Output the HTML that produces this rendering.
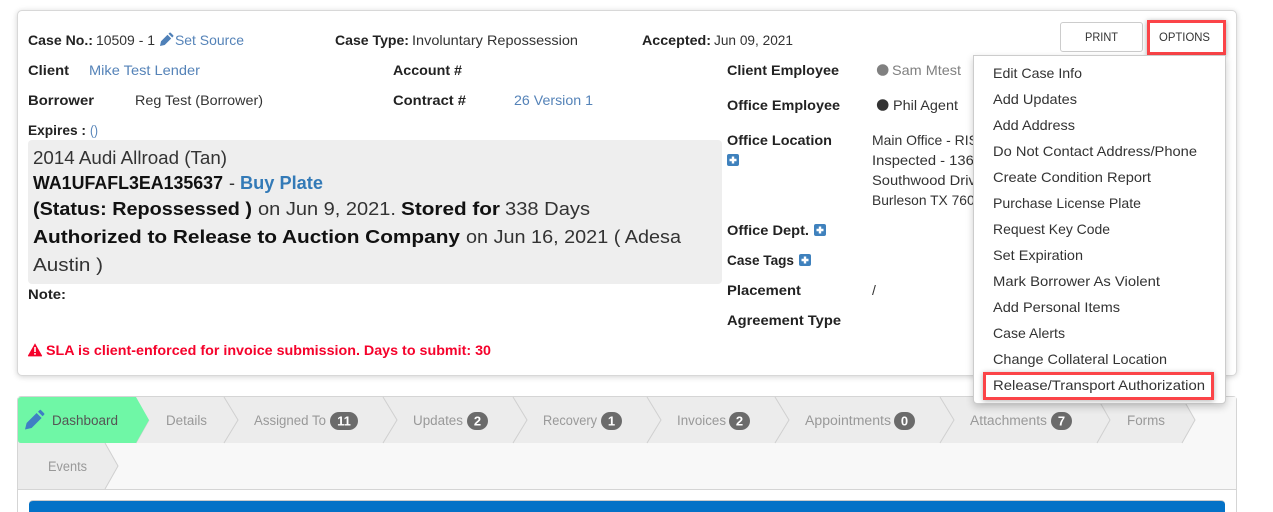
<!DOCTYPE html>
<html>
<head>
<meta charset="utf-8">
<style>
html,body{margin:0;padding:0;background:#fff;width:1273px;height:512px;overflow:hidden;position:relative;font-family:"Liberation Sans",sans-serif}
.abs{position:absolute;box-sizing:border-box}
svg.layer{position:absolute;left:0;top:0;width:1273px;height:512px}
text{font-family:"Liberation Sans",sans-serif;font-size:14px;fill:#333}
.b{font-weight:bold;fill:#222}
.l{fill:#5583b8}
.big{font-size:18.5px;fill:#333}
.bb{font-size:18.5px;font-weight:bold;fill:#111}
.t{fill:#999;font-size:13.5px}
.w{fill:#fff;font-weight:bold;font-size:13px;text-anchor:middle}
.m{fill:#333}
</style>
</head>
<body>
<div class="abs" style="left:17px;top:10px;width:1220px;height:366px;background:#fff;border:1px solid #d8d8d8;border-radius:5px;box-shadow:0 1px 6px rgba(0,0,0,.18)"></div>
<div class="abs" style="left:28px;top:140px;width:694px;height:144px;background:#eee;border-radius:4px"></div>

<svg class="layer" viewBox="0 0 1273 512">
<text class="b" x="28" y="45" textLength="65" lengthAdjust="spacingAndGlyphs">Case No.:</text>
<text x="96" y="45" textLength="59" lengthAdjust="spacingAndGlyphs">10509 - 1</text>
<path d="M160 46l1-4.700 6.500-6.500 3.700 3.700-6.500 6.500zM168.500 33.800l1-1q.6-.6 1.200 0l2.500 2.500q.6.6 0 1.200l-1 1z" fill="#4f80b8"/>
<text class="l" x="175" y="45" textLength="69" lengthAdjust="spacingAndGlyphs">Set Source</text>
<text class="b" x="335" y="45" textLength="74" lengthAdjust="spacingAndGlyphs">Case Type:</text>
<text x="412" y="45" textLength="166" lengthAdjust="spacingAndGlyphs">Involuntary Repossession</text>
<text class="b" x="642" y="45" textLength="69" lengthAdjust="spacingAndGlyphs">Accepted:</text>
<text x="714" y="45" textLength="79" lengthAdjust="spacingAndGlyphs">Jun 09, 2021</text>

<text class="b" x="28" y="75" textLength="41" lengthAdjust="spacingAndGlyphs">Client</text>
<text class="l" x="89" y="75" textLength="111" lengthAdjust="spacingAndGlyphs">Mike Test Lender</text>
<text class="b" x="393" y="75" textLength="69" lengthAdjust="spacingAndGlyphs">Account #</text>
<text class="b" x="28" y="105" textLength="66" lengthAdjust="spacingAndGlyphs">Borrower</text>
<text x="135" y="105" textLength="128" lengthAdjust="spacingAndGlyphs">Reg Test (Borrower)</text>
<text class="b" x="393" y="105" textLength="73" lengthAdjust="spacingAndGlyphs">Contract #</text>
<text class="l" x="514" y="105" textLength="79" lengthAdjust="spacingAndGlyphs">26 Version 1</text>
<text class="b" x="28" y="135" textLength="58" lengthAdjust="spacingAndGlyphs">Expires :</text>
<text class="l" x="90" y="135" textLength="8" lengthAdjust="spacingAndGlyphs">()</text>

<text class="big" x="33" y="164" textLength="194" lengthAdjust="spacingAndGlyphs">2014 Audi Allroad (Tan)</text>
<text class="bb" x="33" y="189" textLength="190" lengthAdjust="spacingAndGlyphs">WA1UFAFL3EA135637</text>
<text class="big" x="229" y="189" textLength="6" lengthAdjust="spacingAndGlyphs">-</text>
<text class="bb" x="240" y="189" textLength="83" lengthAdjust="spacingAndGlyphs" style="fill:#337ab7">Buy Plate</text>
<text class="bb" x="33" y="215" textLength="219" lengthAdjust="spacingAndGlyphs">(Status: Repossessed )</text>
<text class="big" x="258" y="215" textLength="138" lengthAdjust="spacingAndGlyphs">on Jun 9, 2021.</text>
<text class="bb" x="401" y="215" textLength="99" lengthAdjust="spacingAndGlyphs">Stored for</text>
<text class="big" x="505" y="215" textLength="85" lengthAdjust="spacingAndGlyphs">338 Days</text>
<text class="bb" x="33" y="243" textLength="427" lengthAdjust="spacingAndGlyphs">Authorized to Release to Auction Company</text>
<text class="big" x="466" y="243" textLength="215" lengthAdjust="spacingAndGlyphs">on Jun 16, 2021 ( Adesa</text>
<text class="big" x="33" y="271" textLength="70" lengthAdjust="spacingAndGlyphs">Austin )</text>

<text class="b" x="28" y="299" textLength="38" lengthAdjust="spacingAndGlyphs">Note:</text>
<path d="M35 343.200l7 12.300a.6.6 0 0 1-.5.9h-13a.6.6 0 0 1-.5-.9z" fill="#f5022b"/>
<rect x="34.200" y="347" width="1.600" height="5" fill="#fff"/><rect x="34.200" y="353" width="1.600" height="1.700" fill="#fff"/>
<text x="46" y="355" textLength="445" lengthAdjust="spacingAndGlyphs" style="font-weight:bold;fill:#f5022b">SLA is client-enforced for invoice submission. Days to submit: 30</text>

<text class="b" x="727" y="75" textLength="112" lengthAdjust="spacingAndGlyphs">Client Employee</text>
<circle cx="882.700" cy="70" r="5.800" fill="#808080"/>
<text x="892" y="75" textLength="69" lengthAdjust="spacingAndGlyphs" style="fill:#808080">Sam Mtest</text>
<text class="b" x="727" y="110" textLength="113" lengthAdjust="spacingAndGlyphs">Office Employee</text>
<circle cx="882.700" cy="105" r="5.800" fill="#333"/>
<text x="893" y="110" textLength="65" lengthAdjust="spacingAndGlyphs">Phil Agent</text>
<text class="b" x="727" y="145" textLength="105" lengthAdjust="spacingAndGlyphs">Office Location</text>
<rect x="727" y="154" width="12" height="12" rx="2" fill="#3f81bd"/><path d="M729.500 160h7M733 156.500v7" stroke="#fff" stroke-width="2.400"/>
<text x="872" y="145" textLength="116" lengthAdjust="spacingAndGlyphs">Main Office - RISC</text>
<text x="872" y="165" textLength="110" lengthAdjust="spacingAndGlyphs">Inspected - 1360</text>
<text x="872" y="185" textLength="112" lengthAdjust="spacingAndGlyphs">Southwood Drive</text>
<text x="872" y="205" textLength="118" lengthAdjust="spacingAndGlyphs">Burleson TX 76028</text>
<text class="b" x="727" y="235" textLength="82" lengthAdjust="spacingAndGlyphs">Office Dept.</text>
<rect x="814" y="224" width="12" height="12" rx="2" fill="#3f81bd"/><path d="M816.500 230h7M820 226.500v7" stroke="#fff" stroke-width="2.400"/>
<text class="b" x="727" y="265" textLength="67" lengthAdjust="spacingAndGlyphs">Case Tags</text>
<rect x="799" y="254" width="12" height="12" rx="2" fill="#3f81bd"/><path d="M801.500 260h7M805 256.500v7" stroke="#fff" stroke-width="2.400"/>
<text class="b" x="727" y="295" textLength="74" lengthAdjust="spacingAndGlyphs">Placement</text>
<text x="872" y="295">/</text>
<text class="b" x="727" y="325" textLength="114" lengthAdjust="spacingAndGlyphs">Agreement Type</text>
</svg>

<!-- tabs panel -->
<div class="abs" style="left:17px;top:396px;width:1220px;height:130px;background:#fff;border:1px solid #d5d5d5;border-radius:4px 4px 0 0"></div>
<svg class="layer" viewBox="0 0 1273 512">
<rect x="18" y="397" width="1218" height="92" fill="#f8f8f8"/>
<line x1="18" y1="489.500" x2="1236" y2="489.500" stroke="#d5d5d5"/>
<path d="M18 397H1182L1195 420L1182 443H18Z" fill="#ececec"/>
<path d="M18 443H105L118 466L105 489H18Z" fill="#ececec"/>
<g fill="none" stroke="#d0d0d0">
<path d="M224 397L238 420L224 443"/><path d="M383 397L397 420L383 443"/><path d="M513 397L527 420L513 443"/><path d="M647 397L661 420L647 443"/><path d="M775 397L789 420L775 443"/><path d="M940 397L954 420L940 443"/><path d="M1097 397L1110 420L1097 443"/><path d="M1182 397L1195 420L1182 443"/><path d="M105 443L118 466L105 489"/>
<path d="M136 443L149 420"/>
</g>
<path d="M21 397H136L149 420L136 443H21Q18 443 18 440V400Q18 397 21 397Z" fill="#6ff7a6"/>
<path d="M25 429.500l1.600-6.500 10-10 5 5-10 10zM38 411.700l1.500-1.500q.8-.8 1.600 0l3 3q.8.8 0 1.600l-1.500 1.500z" fill="#3f7fc4"/>
<text x="52" y="425" textLength="66" lengthAdjust="spacingAndGlyphs" style="font-size:13.500px;fill:#555">Dashboard</text>
<text class="t" x="166" y="425" textLength="41" lengthAdjust="spacingAndGlyphs">Details</text>
<text class="t" x="254" y="425" textLength="72" lengthAdjust="spacingAndGlyphs">Assigned To</text>
<rect x="330" y="412" width="28" height="18" rx="9" fill="#6b6b6b"/><text class="w" x="344" y="425.500">11</text>
<text class="t" x="413" y="425" textLength="50" lengthAdjust="spacingAndGlyphs">Updates</text>
<rect x="467" y="412" width="21" height="18" rx="9" fill="#6b6b6b"/><text class="w" x="477.500" y="425.500">2</text>
<text class="t" x="543" y="425" textLength="54" lengthAdjust="spacingAndGlyphs">Recovery</text>
<rect x="601" y="412" width="21" height="18" rx="9" fill="#6b6b6b"/><text class="w" x="611.500" y="425.500">1</text>
<text class="t" x="677" y="425" textLength="49" lengthAdjust="spacingAndGlyphs">Invoices</text>
<rect x="729" y="412" width="21" height="18" rx="9" fill="#6b6b6b"/><text class="w" x="739.500" y="425.500">2</text>
<text class="t" x="805" y="425" textLength="86" lengthAdjust="spacingAndGlyphs">Appointments</text>
<rect x="894" y="412" width="21" height="18" rx="9" fill="#6b6b6b"/><text class="w" x="904.500" y="425.500">0</text>
<text class="t" x="970" y="425" textLength="77" lengthAdjust="spacingAndGlyphs">Attachments</text>
<rect x="1051" y="412" width="21" height="18" rx="9" fill="#6b6b6b"/><text class="w" x="1061.500" y="425.500">7</text>
<text class="t" x="1127" y="425" textLength="38" lengthAdjust="spacingAndGlyphs">Forms</text>
<text class="t" x="48" y="471" textLength="39" lengthAdjust="spacingAndGlyphs">Events</text>
</svg>
<div class="abs" style="left:29px;top:500px;width:1196px;height:20px;background:#0472c7;border-top:1px solid #ccc;border-radius:4px 4px 0 0"></div>

<!-- buttons -->
<div class="abs" style="left:1060px;top:22px;width:83px;height:30px;background:#fff;border:1px solid #ccc;border-radius:3px"></div>
<div class="abs" style="left:1147px;top:20px;width:79px;height:35px;background:#fff;border:3px solid #fb4448;box-shadow:0 1px 5px rgba(0,0,0,.35)"></div>

<!-- dropdown -->
<div class="abs" style="left:973px;top:55px;width:253px;height:349px;background:#fff;border:1px solid #ccc;border-radius:0 0 4px 4px;box-shadow:0 3px 8px rgba(0,0,0,.2)"></div>
<div class="abs" style="left:983px;top:372px;width:231px;height:28px;background:#fff;border:3px solid #fb4448;box-shadow:0 1px 5px rgba(0,0,0,.3)"></div>

<svg class="layer" viewBox="0 0 1273 512">
<text x="1085" y="41" textLength="33" lengthAdjust="spacingAndGlyphs" style="font-size:12px">PRINT</text>
<text x="1159" y="41" textLength="51" lengthAdjust="spacingAndGlyphs" style="font-size:12px">OPTIONS</text>
<text class="m" x="993" y="78" textLength="89" lengthAdjust="spacingAndGlyphs">Edit Case Info</text>
<text class="m" x="993" y="104" textLength="84" lengthAdjust="spacingAndGlyphs">Add Updates</text>
<text class="m" x="993" y="130" textLength="82" lengthAdjust="spacingAndGlyphs">Add Address</text>
<text class="m" x="993" y="156" textLength="204" lengthAdjust="spacingAndGlyphs">Do Not Contact Address/Phone</text>
<text class="m" x="993" y="182" textLength="158" lengthAdjust="spacingAndGlyphs">Create Condition Report</text>
<text class="m" x="993" y="208" textLength="148" lengthAdjust="spacingAndGlyphs">Purchase License Plate</text>
<text class="m" x="993" y="234" textLength="117" lengthAdjust="spacingAndGlyphs">Request Key Code</text>
<text class="m" x="993" y="260" textLength="90" lengthAdjust="spacingAndGlyphs">Set Expiration</text>
<text class="m" x="993" y="286" textLength="167" lengthAdjust="spacingAndGlyphs">Mark Borrower As Violent</text>
<text class="m" x="993" y="312" textLength="127" lengthAdjust="spacingAndGlyphs">Add Personal Items</text>
<text class="m" x="993" y="338" textLength="72" lengthAdjust="spacingAndGlyphs">Case Alerts</text>
<text class="m" x="993" y="364" textLength="174" lengthAdjust="spacingAndGlyphs">Change Collateral Location</text>
<text class="m" x="993" y="390" textLength="212" lengthAdjust="spacingAndGlyphs">Release/Transport Authorization</text>
</svg>
</body>
</html>
